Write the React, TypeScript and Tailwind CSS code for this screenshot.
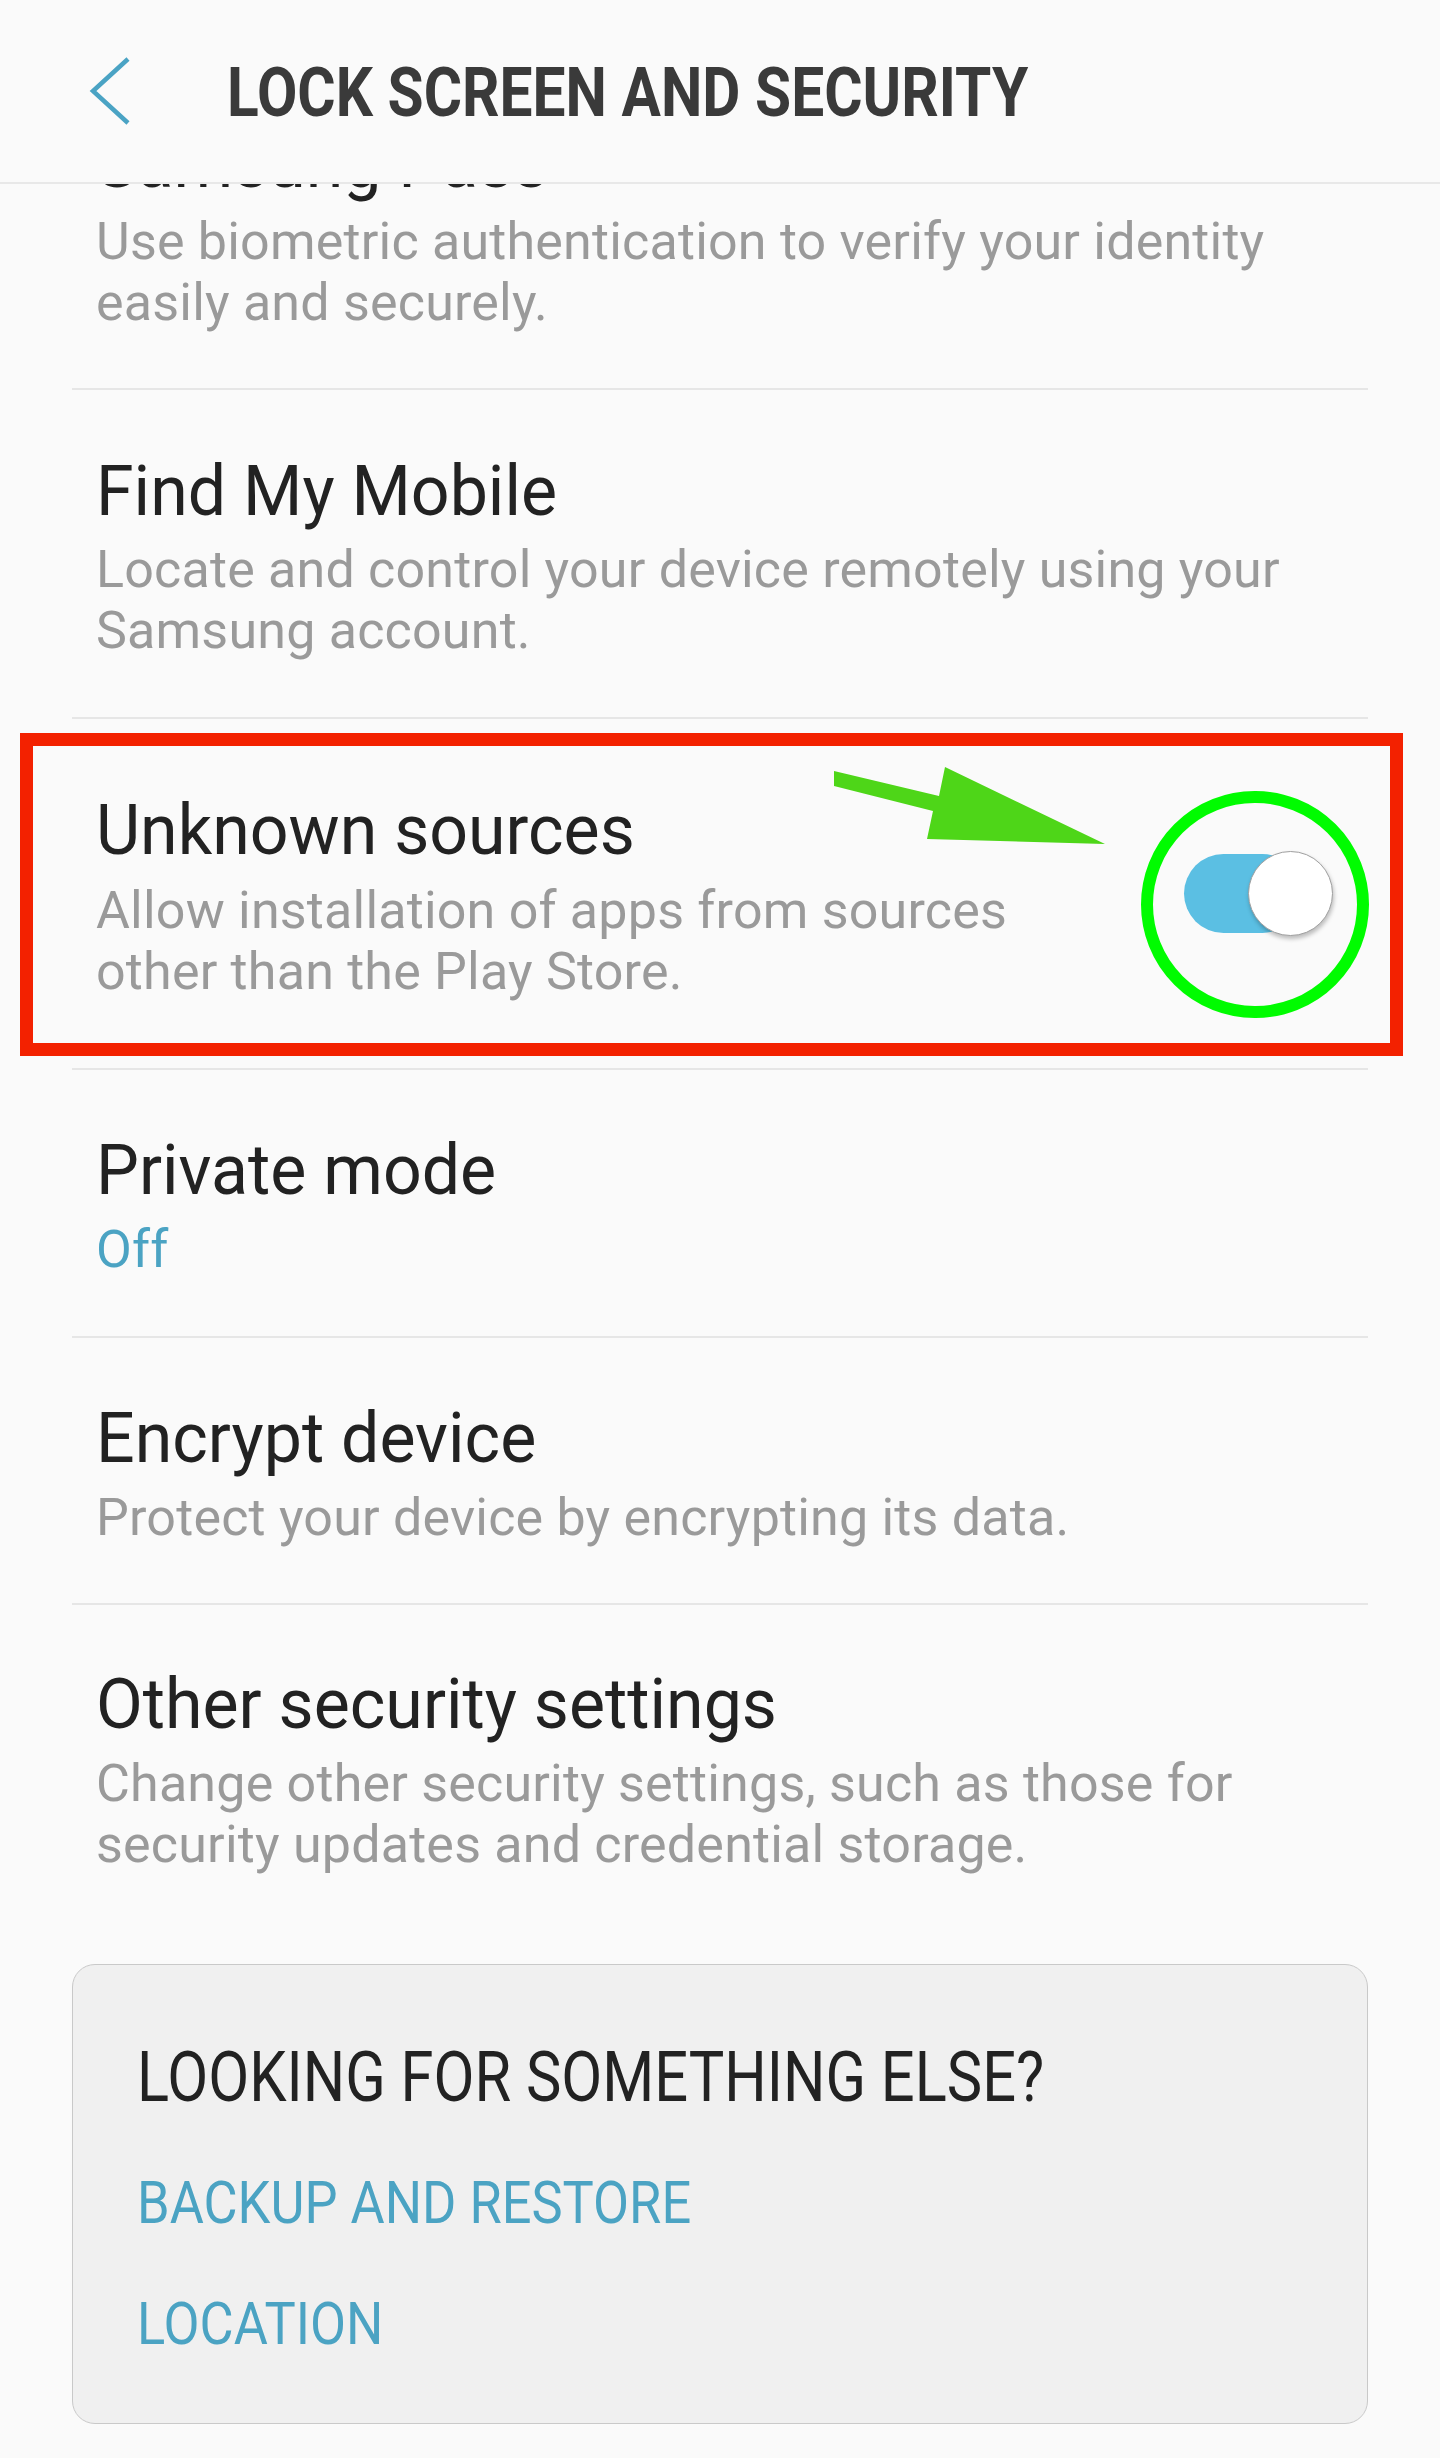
import React from "react";

type ItemProps = {
  title: string;
  lines: string[];
  pt: string;
  pb: string;
  gap: string;
  blue?: boolean;
  toggle?: boolean;
  extra?: string;
};

function Toggle() {
  return (
    <div className="relative w-[149px] h-[85px] mr-[35px] -mt-[10px] shrink-0">
      <div className="absolute left-0 top-[3px] w-[118px] h-[79px] rounded-full bg-[#5bbfe3]" />
      <div className="absolute right-0 top-0 w-[85px] h-[85px] rounded-full bg-white border border-[#a0a0a0] shadow-[1px_3px_4px_rgba(0,0,0,0.25)]" />
    </div>
  );
}

function Item({ title, lines, pt, pb, gap, blue, toggle, extra }: ItemProps) {
  return (
    <div className={`flex items-center ${pt} ${pb} ${extra ?? ""}`}>
      <div className="flex-1 pl-[24px]">
        <div className="text-[70px] leading-[72px] text-[#222222] whitespace-nowrap">
          <span className="inline-block origin-left scale-x-[0.972]">{title}</span>
        </div>
        <div
          className={`${gap} text-[52px] leading-[61px] tracking-[0.2px] whitespace-nowrap ${
            blue ? "text-[#4ba3c3]" : "text-[#9a9a9a]"
          }`}
        >
          {lines.map((l, i) => (
            <div key={i}>{l}</div>
          ))}
        </div>
      </div>
      {toggle && <Toggle />}
    </div>
  );
}

function Divider() {
  return <div className="h-[2px] bg-[#e6e6e6]" />;
}

export default function App() {
  return (
    <div className="relative w-[1440px] h-[2458px] overflow-hidden bg-[#fafafa] font-['Roboto','Liberation_Sans',sans-serif]">
      {/* Header */}
      <div className="relative z-10 h-[184px] border-b-2 border-[#e8e8e8] bg-[#fafafa] flex items-center">
        <svg className="ml-[88px] shrink-0" width="44" height="68" viewBox="0 0 44 68" fill="none">
          <polyline
            points="40,2 5,34 40,66"
            stroke="#4aa3c4"
            strokeWidth="4.5"
            strokeLinecap="butt"
            strokeLinejoin="miter"
          />
        </svg>
        <div className="ml-[95px] mt-[4px] inline-block origin-left scale-x-[0.85] text-[69px] leading-[82px] font-bold text-[#3a3a3a] whitespace-nowrap">
          LOCK SCREEN AND SECURITY
        </div>
      </div>

      {/* List */}
      <div className="overflow-hidden px-[72px] h-[2274px]">
        <Item
          title="Samsung Pass"
          lines={["Use biometric authentication to verify your identity", "easily and securely."]}
          pt="-mt-[57px]"
          pb="pb-[55px]"
          gap="mt-[12px]"
        />
        <Divider />
        <Item
          title="Find My Mobile"
          lines={["Locate and control your device remotely using your", "Samsung account."]}
          pt="pt-[65px]"
          pb="pb-[56px]"
          gap="mt-[12px]"
        />
        <Divider />
        <Item
          title="Unknown sources"
          lines={["Allow installation of apps from sources", "other than the Play Store."]}
          pt="pt-[75px]"
          pb="pb-[66px]"
          gap="mt-[14px]"
          toggle
        />
        <Divider />
        <Item title="Private mode" lines={["Off"]} pt="pt-[64px]" pb="pb-[56px]" gap="mt-[13px]" blue />
        <Divider />
        <Item
          title="Encrypt device"
          lines={["Protect your device by encrypting its data."]}
          pt="pt-[64px]"
          pb="pb-[55px]"
          gap="mt-[13px]"
        />
        <Divider />
        <Item
          title="Other security settings"
          lines={["Change other security settings, such as those for", "security updates and credential storage."]}
          pt="pt-[63px]"
          pb="pb-[0px]"
          gap="mt-[13px]"
        />

        {/* Card */}
        <div className="mt-[89px] h-[460px] rounded-[23px] border border-[#c9c9c9] bg-[#f0f0f0] pl-[64px] pt-[72px]">
          <div className="inline-block origin-left scale-x-[0.851] text-[70px] leading-[80px] text-[#222222] whitespace-nowrap">
            LOOKING FOR SOMETHING ELSE?
          </div>
          <div className="mt-[51px] text-[60px] leading-[70px] text-[#4ba3c3] whitespace-nowrap">
            <span className="inline-block origin-left scale-x-[0.873]">BACKUP AND RESTORE</span>
          </div>
          <div className="mt-[51px] text-[60px] leading-[70px] text-[#4ba3c3] whitespace-nowrap">
            <span className="inline-block origin-left scale-x-[0.873]">LOCATION</span>
          </div>
        </div>
      </div>

      {/* Annotations */}
      <div className="absolute left-[20px] top-[733px] w-[1383px] h-[323px] border-[13px] border-[#f32100] pointer-events-none" />
      <div className="absolute left-[1141px] top-[791px] w-[228px] h-[227px] rounded-full border-[12px] border-[#00fc00] pointer-events-none" />
      <svg
        className="absolute left-[820px] top-[760px] pointer-events-none"
        width="300"
        height="100"
        viewBox="0 0 300 100"
      >
        <polygon
          points="14,11 119,36 125,7 285,84 107,79 113,51 14,26"
          fill="#4ed618"
        />
      </svg>
    </div>
  );
}
